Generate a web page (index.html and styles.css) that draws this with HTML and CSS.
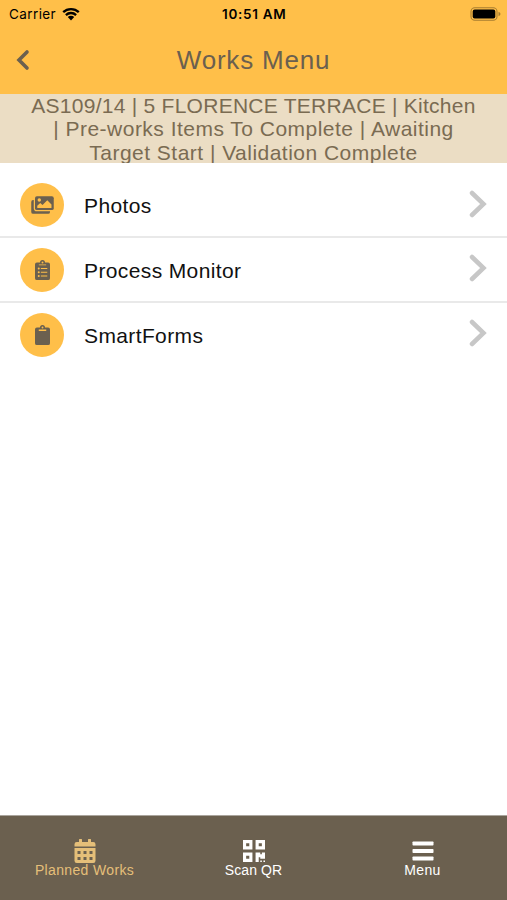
FILE: index.html
```html
<!DOCTYPE html>
<html lang="en">

<head>
    <meta charset="UTF-8">
    <meta name="viewport" content="width=device-width, initial-scale=1.0">
    <title>Works Menu</title>
    <link rel="stylesheet" href="styles.css">
</head>

<body>
    <div class="app">
        <!-- Status bar -->
        <div class="status-bar">
            <div class="carrier">
                <span>Carrier</span>
                <svg class="wifi" viewBox="0 0 18 14">
                    <path d="M1.2 5.2a11.2 11.2 0 0 1 15.6 0M3.9 8.1a7.3 7.3 0 0 1 10.2 0" fill="none" stroke="#000" stroke-width="2.3"/>
                    <path d="M5.8 10.1a4.6 4.6 0 0 1 6.4 0L9 13.5z"/>
                </svg>
            </div>
            <div class="time">10:51 AM</div>
            <div class="battery">
                <svg viewBox="0 0 31 14">
                    <rect x="1" y=".7" width="26" height="12.6" rx="3.8" fill="none" stroke="#a87e31" stroke-width="1.1"/>
                    <rect x="2.7" y="2.5" width="22.6" height="9" rx="2"/>
                    <path d="M28.5 4.8q2 .8 2 2.2t-2 2.2z" fill="#a87e31"/>
                </svg>
            </div>
        </div>

        <!-- Title -->
        <header class="header">
            <svg class="back" viewBox="0 0 14 22">
                <path d="M11 3L3 11l8 8" fill="none" stroke="currentColor" stroke-width="3.6" stroke-linecap="round"/>
            </svg>
            <h1>Works Menu</h1>
        </header>

        <div class="job-info">
            <div class="line-one">AS109/14 | 5 FLORENCE TERRACE | Kitchen</div>
            <div class="line-two">| Pre-works Items To Complete | Awaiting</div>
            <div class="line-three">Target Start | Validation Complete</div>
        </div>

        <!-- Menu items -->
        <main class="list">
            <div class="item">
                <div class="circle">
                    <svg class="icon-photos" viewBox="0 0 576 512">
                        <path d="M480 416v16a48 48 0 0 1-48 48H48a48 48 0 0 1-48-48V176a48 48 0 0 1 48-48h16v208a80 80 0 0 0 80 80z"/>
                        <rect x="96" y="32" width="480" height="352" rx="48"/>
                        <circle cx="206" cy="128" r="44" class="gold"/>
                        <path d="M154 330v-52l76-76 58 54 122-124 108 108v90z" class="gold"/>
                    </svg>
                </div>
                <div class="label">Photos</div>
                <svg class="chevron" viewBox="0 0 18 28">
                    <path d="M3 3l11.500 11L3 25" fill="none" stroke="currentColor" stroke-width="4.500" stroke-linecap="round"/>
                </svg>
            </div>
            <div class="item">
                <div class="circle">
                    <svg class="icon-clipboard" viewBox="0 0 384 512">
                        <path d="M336 64h-80a64 64 0 0 0-128 0H48a48 48 0 0 0-48 48v352a48 48 0 0 0 48 48h288a48 48 0 0 0 48-48V112a48 48 0 0 0-48-48z"/>
                        <g class="gold">
                            <circle cx="192" cy="64" r="24"/>
                            <path d="M98 112h188v24H98zM150 204h164v28H150zM150 300h164v28H150zM150 396h164v28H150z"/>
                            <circle cx="96" cy="218" r="26"/>
                            <circle cx="96" cy="314" r="26"/>
                            <circle cx="96" cy="410" r="26"/>
                        </g>
                    </svg>
                </div>
                <div class="label">Process Monitor</div>
                <svg class="chevron" viewBox="0 0 18 28">
                    <path d="M3 3l11.500 11L3 25" fill="none" stroke="currentColor" stroke-width="4.500" stroke-linecap="round"/>
                </svg>
            </div>
            <div class="item">
                <div class="circle">
                    <svg class="icon-clipboard" viewBox="0 0 384 512">
                        <path d="M336 64h-80a64 64 0 0 0-128 0H48a48 48 0 0 0-48 48v352a48 48 0 0 0 48 48h288a48 48 0 0 0 48-48V112a48 48 0 0 0-48-48z"/>
                        <g class="gold">
                            <circle cx="192" cy="64" r="24"/>
                            <path d="M96 114h192v30q0 12-12 12H108q-12 0-12-12z"/>
                        </g>
                    </svg>
                </div>
                <div class="label">SmartForms</div>
                <svg class="chevron" viewBox="0 0 18 28">
                    <path d="M3 3l11.500 11L3 25" fill="none" stroke="currentColor" stroke-width="4.500" stroke-linecap="round"/>
                </svg>
            </div>
        </main>

        <!-- Tabs -->
        <nav class="tabs">
            <div class="tab active">
                <svg viewBox="0 0 448 512">
                    <path fill-rule="evenodd" d="M0 192h448v272a48 48 0 0 1-48 48H48a48 48 0 0 1-48-48zM64 256v64h64v-64zm128 0v64h64v-64zm128 0v64h64v-64zM64 384v64h64v-64zm128 0v64h64v-64zm128 0v64h64v-64z"/>
                    <path d="M0 160v-48a48 48 0 0 1 48-48h48V12q0-12 12-12h40q12 0 12 12v52h128V12q0-12 12-12h40q12 0 12 12v52h48a48 48 0 0 1 48 48v48z"/>
                </svg>
                <span>Planned Works</span>
            </div>
            <div class="tab">
                <svg viewBox="0 0 448 448">
                    <path fill-rule="evenodd" d="M0 0h192v192H0zM64 64v64h64V64zM256 0h192v192H256zM320 64v64h64V64zM0 256h192v192H0zM64 320v64h64v-64z"/>
                    <path d="M256 256h96v32h32v-32h64v128h-96v-32h-32v96h-64zM352 416h32v32h-32zM416 416h32v32h-32z"/>
                </svg>
                <span class="scan">Scan QR</span>
            </div>
            <div class="tab">
                <svg viewBox="0 0 22 22">
                    <rect x=".5" y="1.500" width="21" height="4" rx=".7"/>
                    <rect x=".5" y="9" width="21" height="4" rx=".7"/>
                    <rect x=".5" y="16.500" width="21" height="4" rx=".7"/>
                </svg>
                <span>Menu</span>
            </div>
        </nav>
    </div>
</body>

</html>
```
FILE: styles.css
```css
* {
    box-sizing: border-box;
}

body {
    margin: 0;
    font-family: "Liberation Sans", Arial, sans-serif;
    background-color: #fff;
}

.app {
    height: 900px;
    display: flex;
    flex-direction: column;
}

svg {
    display: block;
    fill: currentColor;
}

.status-bar {
    height: 27px;
    padding: 0 6px 0 9px;
    display: grid;
    grid-template-columns: 1fr 66px 1fr;
    align-items: center;
    background-color: #ffbf49;
    font-family: Inter, sans-serif;
    font-size: 13.5px;
}

.carrier {
    display: flex;
    align-items: center;
    gap: 6px;
    letter-spacing: 0.4px;
}

.wifi {
    width: 18px;
    height: 14px;
}

.time {
    font-weight: 600;
    letter-spacing: 0.7px;
    white-space: nowrap;
}

.battery {
    display: flex;
    justify-content: flex-end;
}

.battery svg {
    width: 31px;
    height: 14px;
}

.header {
    height: 67px;
    padding: 0 16px 2px;
    display: grid;
    grid-template-columns: 14px 1fr 14px;
    align-items: center;
    background-color: #ffbf49;
    color: #6b604f;
}

.back {
    width: 14px;
    height: 22px;
}

h1 {
    margin: 0;
    padding-top: 1px;
    text-align: center;
    font-size: 26px;
    font-weight: normal;
    letter-spacing: 0.8px;
}

.job-info {
    height: 69px;
    overflow: hidden;
    background-color: #ebddc4;
    color: #7a6b52;
    text-align: center;
    font-size: 21px;
    line-height: 23.3px;
    white-space: nowrap;
}

.line-one {
    letter-spacing: 0.26px;
}

.line-two,
.line-three {
    letter-spacing: 0.48px;
}

.list {
    flex: 1;
    padding-top: 10px;
}

.item {
    height: 64.8px;
    padding: 10px 20px 0;
    display: flex;
    align-items: flex-start;
    border-bottom: 2px solid #e9e9e9;
}

.item:last-child {
    border-bottom: none;
}

.circle {
    width: 44px;
    height: 44px;
    display: flex;
    align-items: center;
    justify-content: center;
    border-radius: 50%;
    background-color: #ffbf49;
    color: #6b604f;
}

.gold {
    fill: #ffbf49;
}

.icon-photos {
    width: 23px;
    height: 20px;
}

.icon-clipboard {
    width: 15px;
    height: 20px;
}

.label {
    flex: 1;
    margin-left: 20px;
    line-height: 46px;
    font-size: 21px;
    letter-spacing: 0.38px;
    color: #111;
}

.chevron {
    width: 18px;
    height: 28px;
    margin-top: 6.5px;
    color: #c7c7c7;
}

.tabs {
    height: 85px;
    display: grid;
    grid-template-columns: repeat(3, 1fr);
    border-top: 1px solid #aaa59d;
    background-color: #6b604f;
    color: #fff;
    font-size: 14px;
    letter-spacing: 0.35px;
}

.tab {
    padding-top: 23px;
    display: flex;
    flex-direction: column;
    align-items: center;
    line-height: 14px;
}

.tab svg {
    width: 22px;
    height: 24px;
}

.tab.active {
    color: #e5bf79;
}

.scan {
    letter-spacing: 0.1px;
}
```
